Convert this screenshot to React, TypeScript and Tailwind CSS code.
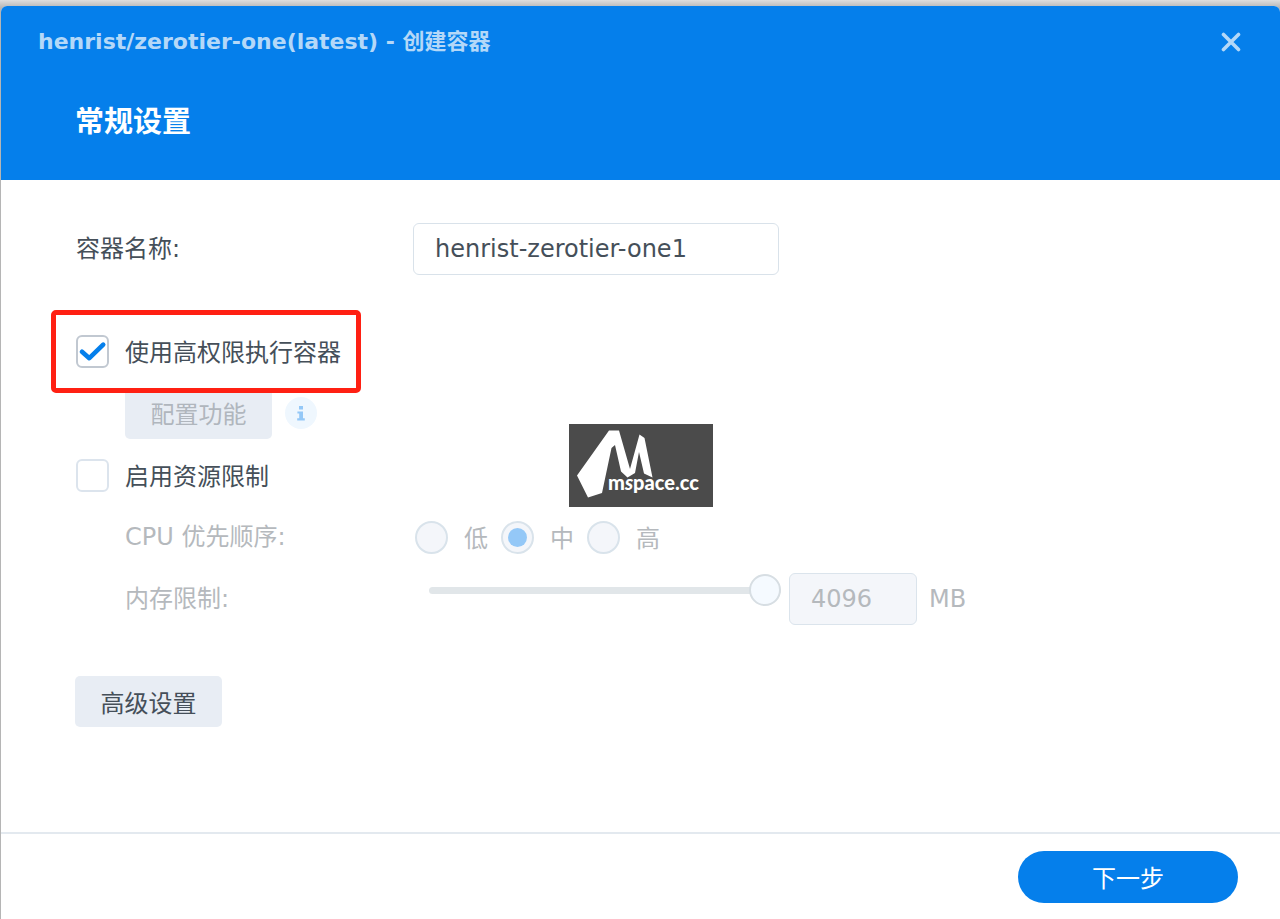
import { useState } from "react";

const checkboxClass =
  "col-start-1 row-start-1 size-[33px] appearance-none rounded-md border-2 border-[#dce4ed] bg-white checked:border-[#c1c8d1] peer";
const radioClass =
  "col-start-1 row-start-1 size-[33px] appearance-none rounded-full border-2 border-[#d9e3eb] bg-[#f4f6fa] peer";
const rowClass = "flex h-[62px] items-center";

type CheckRowProps = {
  id: string;
  label: string;
  checked: boolean;
  onChange: (value: boolean) => void;
  highlighted?: boolean;
};

function CheckRow({ id, label, checked, onChange, highlighted }: CheckRowProps) {
  return (
    <div className={`${rowClass} relative`}>
      <span className="grid place-items-center">
        <input
          id={id}
          type="checkbox"
          className={checkboxClass}
          checked={checked}
          onChange={(e) => onChange(e.target.checked)}
        />
        <svg
          viewBox="0 0 33 33"
          className="pointer-events-none invisible col-start-1 row-start-1 size-[33px] peer-checked:visible"
          fill="none"
          stroke="#057feb"
          strokeWidth="4.6"
          strokeLinecap="round"
          strokeLinejoin="round"
          aria-hidden="true"
        >
          <path d="M6 16.8 L13.3 23.2 L27.2 9.6" />
        </svg>
      </span>
      <label htmlFor={id} className="ml-4 pt-1">
        {label}
      </label>
      {highlighted && (
        <span className="pointer-events-none absolute -left-[25px] -top-[10px] z-10 h-[83px] w-[310px] rounded-[5px] border-[5px] border-[#ff2013]" />
      )}
    </div>
  );
}

function Watermark() {
  return (
    <svg
      viewBox="0 0 144 83"
      className="pointer-events-none absolute left-1/2 top-[418px] h-[83px] w-36 -translate-x-1/2"
      role="img"
      aria-label="mspace.cc"
    >
      <rect width="144" height="83" fill="#4b4b4b" />
      <path
        d="M8 51.5 L40 6.5 L50 6.5 L61 45 L70.5 10.5 L75.5 14 L83.5 53.5 L75 49.5 L70 28 L66 49 L58.5 53.5 L52 47.5 L46 21 L42.5 24 L33 69 L19 73.5 Z"
        fill="#fff"
      />
      <text
        x="39"
        y="66"
        fill="#fff"
        className="font-['Lato',sans-serif] text-[20px] font-black"
      >
        m<tspan fontStyle="italic">s</tspan>pace.cc
      </text>
    </svg>
  );
}

export default function App() {
  const [name, setName] = useState("henrist-zerotier-one1");
  const [privileged, setPrivileged] = useState(true);
  const [limited, setLimited] = useState(false);

  return (
    <div className="flex min-h-screen flex-col bg-linear-to-b from-[#dedede] to-[#b5b5b5] to-[8px] pl-px pt-[6px] font-['DejaVu_Sans','Noto_Sans_CJK_SC',sans-serif] text-2xl text-[#454f59]">
      <div className="relative flex grow flex-col overflow-hidden rounded-t-md bg-white">
        <header className="h-[174px] bg-[#057feb] pl-[37px] pr-[39px] pt-[20px]">
          <div className="flex items-center justify-between text-[#b4d8f8]">
            <h1 className="text-[22px] font-bold leading-8">
              henrist/zerotier-one(latest) - 创建容器
            </h1>
            <button type="button" aria-label="关闭" className="size-5">
              <svg
                viewBox="0 0 20 20"
                fill="none"
                stroke="currentColor"
                strokeWidth="3.6"
                strokeLinecap="round"
                aria-hidden="true"
              >
                <path d="M2.5 2.5 L17.5 17.5 M17.5 2.5 L2.5 17.5" />
              </svg>
            </button>
          </div>
          <h2 className="pl-[37px] pt-[44px] text-[29px] font-bold leading-10 text-white">
            常规设置
          </h2>
        </header>

        <main className="grow pl-[75px] pt-[38px]">
          <div className={rowClass}>
            <label htmlFor="name" className="w-[337px]">
              容器名称:
            </label>
            <input
              id="name"
              type="text"
              value={name}
              onChange={(e) => setName(e.target.value)}
              className="h-[52px] w-[366px] rounded-md border border-[#d9e2ea] bg-white px-[21px]"
            />
          </div>

          <div className="mt-10">
            <CheckRow
              id="privileged"
              label="使用高权限执行容器"
              checked={privileged}
              onChange={setPrivileged}
              highlighted
            />
            <div className={`${rowClass} pl-[49px]`}>
              <button
                type="button"
                disabled
                className="h-[51px] w-[147px] rounded-[5px] bg-[#e8edf4] pt-1 text-[#b0b6bd]"
              >
                配置功能
              </button>
              <svg viewBox="0 0 32 32" className="ml-[13px] size-8" role="img" aria-label="说明">
                <circle cx="16" cy="16" r="16" fill="#eff7fe" />
                <path
                  d="M14 9 H18 V12.4 H14 Z M12.4 14.4 H18 V21.2 H19.8 V23.4 H12.2 V21.2 H14.2 V16.6 H12.4 Z"
                  fill="#94c8f7"
                />
              </svg>
            </div>
            <CheckRow
              id="limited"
              label="启用资源限制"
              checked={limited}
              onChange={setLimited}
            />

            <fieldset disabled className="text-[#b5b9bd]">
              <div className={`${rowClass} pl-[49px]`} role="radiogroup" aria-label="CPU 优先顺序">
                <span className="w-[290px]">CPU 优先顺序:</span>
                {["低", "中", "高"].map((level) => (
                  <label key={level} className="flex w-[86px] items-center gap-4">
                    <span className="grid place-items-center">
                      <input
                        type="radio"
                        name="priority"
                        value={level}
                        defaultChecked={level === "中"}
                        className={radioClass}
                      />
                      <span className="col-start-1 row-start-1 hidden size-[19px] rounded-full bg-[#94c8f7] peer-checked:block" />
                    </span>
                    <span className="pt-1">{level}</span>
                  </label>
                ))}
              </div>
              <div className={`${rowClass} pl-[49px]`}>
                <label htmlFor="memory" className="w-[304px]">
                  内存限制:
                </label>
                <input
                  type="range"
                  aria-label="内存限制滑块"
                  min={0}
                  max={4096}
                  defaultValue={4096}
                  className="mb-[18px] h-[7px] w-[352px] appearance-none rounded-full bg-[#e1e6e9] [&::-webkit-slider-thumb]:size-8 [&::-webkit-slider-thumb]:appearance-none [&::-webkit-slider-thumb]:rounded-full [&::-webkit-slider-thumb]:border-2 [&::-webkit-slider-thumb]:border-[#d7dee3] [&::-webkit-slider-thumb]:bg-[#f5faff]"
                />
                <input
                  id="memory"
                  type="text"
                  defaultValue="4096"
                  className="ml-2 h-[52px] w-32 rounded-md border border-[#dbe4ec] bg-[#f4f6fa] px-[21px]"
                />
                <span className="ml-3">MB</span>
              </div>
            </fieldset>
          </div>

          <button
            type="button"
            className="-ml-px mt-[46px] h-[51px] w-[147px] rounded-[5px] bg-[#e8edf4] pt-1"
          >
            高级设置
          </button>
        </main>

        <footer className="flex h-[87px] items-center justify-end border-t-2 border-[#e3e9ef] pr-[42px]">
          <button
            type="button"
            className="h-[52px] w-[220px] rounded-full bg-[#057feb] pt-1 text-white"
          >
            下一步
          </button>
        </footer>

        <Watermark />
      </div>
    </div>
  );
}
